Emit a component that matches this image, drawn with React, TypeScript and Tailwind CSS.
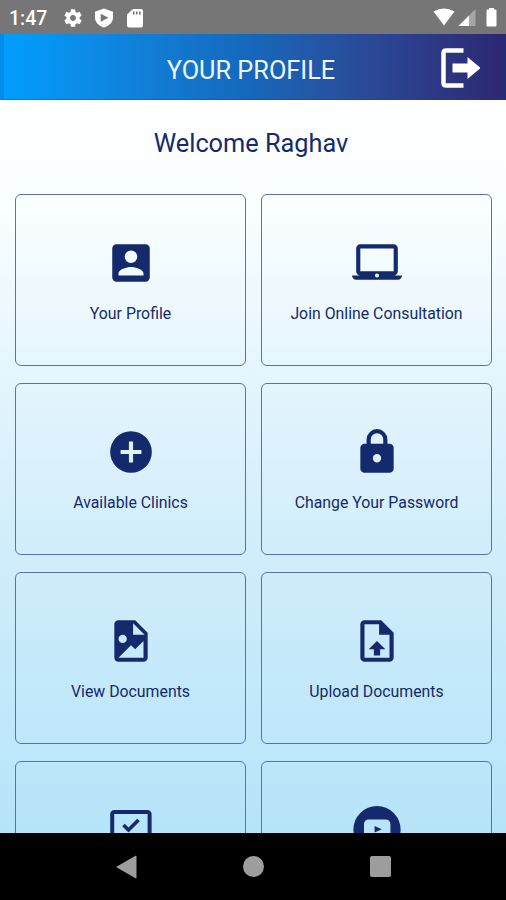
import type { ReactNode } from "react";

type Tile = { label: string; icon: ReactNode };

function Glyph({ d }: { d: string }) {
  return (
    <svg viewBox="0 0 24 24" className="size-[50px] shrink-0" fill="currentColor">
      <path d={d} />
    </svg>
  );
}

const tiles: Tile[] = [
  {
    label: "Your Profile",
    icon: (
      <Glyph d="M6,17C6,15 10,13.9 12,13.9C14,13.9 18,15 18,17V18H6M15,9A3,3 0 0,1 12,12A3,3 0 0,1 9,9A3,3 0 0,1 12,6A3,3 0 0,1 15,9M3,5V19A2,2 0 0,0 5,21H19A2,2 0 0,0 21,19V5A2,2 0 0,0 19,3H5C3.89,3 3,3.9 3,5Z" />
    ),
  },
  {
    label: "Join Online Consultation",
    icon: (
      <Glyph d="M12,19A1,1 0 0,1 11,18A1,1 0 0,1 12,17A1,1 0 0,1 13,18A1,1 0 0,1 12,19M4,5H20V16H4M20,18A2,2 0 0,0 22,16V5C22,3.89 21.1,3 20,3H4C2.89,3 2,3.89 2,5V16A2,2 0 0,0 4,18H0A2,2 0 0,0 2,20H22A2,2 0 0,0 24,18H20Z" />
    ),
  },
  {
    label: "Available Clinics",
    icon: (
      <Glyph d="M17,13H13V17H11V13H7V11H11V7H13V11H17M12,2A10,10 0 0,0 2,12A10,10 0 0,0 12,22A10,10 0 0,0 22,12A10,10 0 0,0 12,2Z" />
    ),
  },
  {
    label: "Change Your Password",
    icon: (
      <Glyph d="M12,17A2,2 0 0,0 14,15C14,13.89 13.1,13 12,13A2,2 0 0,0 10,15A2,2 0 0,0 12,17M18,8A2,2 0 0,1 20,10V20A2,2 0 0,1 18,22H6A2,2 0 0,1 4,20V10C4,8.89 4.9,8 6,8H7V6A5,5 0 0,1 12,1A5,5 0 0,1 17,6V8H18M12,3A3,3 0 0,0 9,6V8H15V6A3,3 0 0,0 12,3Z" />
    ),
  },
  {
    label: "View Documents",
    icon: (
      <Glyph d="M13,9H18.5L13,3.5V9M6,2H14L20,8V20A2,2 0 0,1 18,22H6C4.89,22 4,21.1 4,20V4C4,2.89 4.89,2 6,2M6,20H15L18,20V12L14,16L12,14L6,20M8,9A2,2 0 0,0 6,11A2,2 0 0,0 8,13A2,2 0 0,0 10,11A2,2 0 0,0 8,9Z" />
    ),
  },
  {
    label: "Upload Documents",
    icon: (
      <Glyph d="M14,2L20,8V20A2,2 0 0,1 18,22H6A2,2 0 0,1 4,20V4A2,2 0 0,1 6,2H14M18,20V9H13V4H6V20H18M12,12L16,16H13.5V19H10.5V16H8L12,12Z" />
    ),
  },
  {
    label: "",
    icon: (
      <svg viewBox="0 0 50 50" className="size-[50px] shrink-0" fill="none" stroke="currentColor">
        <rect x="6.2" y="6.9" width="37.4" height="34" rx="2.2" strokeWidth="4" />
        <path d="M17.500 20l5 5 10-10" strokeWidth="3.6" />
      </svg>
    ),
  },
  {
    label: "",
    icon: (
      <svg viewBox="0 0 50 50" className="size-[50px] shrink-0">
        <circle cx="25" cy="24.6" r="23.6" fill="currentColor" />
        <rect x="12" y="14.500" width="26.4" height="20" rx="4.5" fill="#b8e5f9" />
        <path d="M22.6 21l7.2 3.300-7.2 3.300z" fill="currentColor" />
      </svg>
    ),
  },
];

function StatusBar() {
  return (
    <div className="flex h-[34px] shrink-0 items-center bg-[#767676] pl-[9px] pr-2 text-white">
      <span className="w-[53px] pt-1 text-[19.5px] leading-none font-medium">1:47</span>
      <svg viewBox="0 0 24 24" className="mt-px size-[22px]" fill="currentColor">
        <path d="M19.14,12.94c0.04-0.3,0.06-0.61,0.06-0.94c0-0.32-0.02-0.64-0.07-0.94l2.03-1.58c0.18-0.14,0.23-0.41,0.12-0.61l-1.92-3.32c-0.12-0.22-0.37-0.29-0.59-0.22l-2.39,0.96c-0.5-0.38-1.03-0.7-1.62-0.94L14.4,2.81c-0.04-0.24-0.24-0.41-0.48-0.41h-3.84c-0.24,0-0.43,0.17-0.47,0.41L9.25,5.35C8.66,5.59,8.12,5.92,7.63,6.29L5.24,5.33c-0.22-0.08-0.47,0-0.59,0.22L2.74,8.87C2.62,9.08,2.66,9.34,2.86,9.48l2.03,1.58C4.84,11.36,4.8,11.69,4.8,12s0.02,0.64,0.07,0.94l-2.03,1.58c-0.18,0.14-0.23,0.41-0.12,0.61l1.92,3.32c0.12,0.22,0.37,0.29,0.59,0.22l2.39-0.96c0.5,0.38,1.03,0.7,1.62,0.94l0.36,2.54c0.05,0.24,0.24,0.41,0.48,0.41h3.84c0.24,0,0.44-0.17,0.47-0.41l0.36-2.54c0.59-0.24,1.13-0.56,1.62-0.94l2.39,0.96c0.22,0.08,0.47,0,0.59-0.22l1.92-3.32c0.12-0.22,0.07-0.47-0.12-0.61L19.14,12.94z M12,15.2c-1.8,0-3.2-1.4-3.2-3.2s1.4-3.2,3.2-3.2s3.2,1.4,3.2,3.2S13.8,15.2,12,15.2z" />
      </svg>
      <svg viewBox="0 0 20 20" className="mt-px ml-[10px] size-5" fill="currentColor" fillRule="evenodd">
        <path d="M10 .6l9 3.200v5.800c0 4.600-3.700 8.400-9 10-5.300-1.600-9-5.400-9-10V3.800zM6.700 5.800v8l7.800-4z" />
      </svg>
      <svg viewBox="0 0 16 20" className="mt-px ml-[13px] h-5 w-4" fill="currentColor" fillRule="evenodd">
        <path d="M6 1h8a2 2 0 0 1 2 2v14.500a2 2 0 0 1-2 2H2a2 2 0 0 1-2-2V6.500zM6 3.500v3h1.600v-3zM9 3.500v3h1.600v-3zM12 3.500v3h1.600v-3z" />
      </svg>
      <svg viewBox="0 0 66 20" className="ml-auto h-5 w-[66px]" fill="currentColor">
        <path d="M1.500 4.500Q12 -1.500 22.500 4.500L12 18.500z" />
        <path d="M43.500 2v17h-17z" opacity=".35" />
        <path d="M37 8.500V19H26.500z" />
        <path d="M57 2.500V1h5v1.500h1.300q1.200 0 1.200 1.200v14.600q0 1.200-1.200 1.200h-7.600q-1.200 0-1.200-1.200V3.700q0-1.200 1.200-1.200z" />
      </svg>
    </div>
  );
}

export default function App() {
  return (
    <div className="flex h-[900px] w-[506px] flex-col overflow-hidden bg-black font-['Roboto',sans-serif]">
      <StatusBar />
      <header className="grid h-[66px] shrink-0 grid-cols-[1fr_auto_1fr] items-center border-x-4 border-b border-x-[#0b3f8f]/20 border-b-[#1c3f90]/40 bg-linear-to-r from-[#009fff] via-[#1567ba] to-[#2c2770] bg-origin-border">
        <span />
        <h1 className="mr-1 pt-[9px] text-[25.3px] leading-8 text-[#eef6ff]">YOUR PROFILE</h1>
        <svg viewBox="0 0 40 40" className="mt-[3px] mr-[22px] size-10 justify-self-end" fill="none">
          <path d="M23.500 2.500H6Q3.500 2.500 3.500 5v30q0 2.500 2.500 2.500h17.500" stroke="#fff" strokeWidth="4.500" />
          <path d="M12.500 15.500h15V9L40.500 20l-13 11v-6.500h-15z" fill="#fff" />
        </svg>
      </header>
      <main className="min-h-0 flex-1 overflow-hidden bg-[linear-gradient(to_bottom,#ffffff_0%,#f9feff_15%,#e4f5fd_38%,#d0edfb_62%,#b5e4f9_100%)] px-[15px] text-[#152a6c]">
        <h2 className="pt-7 pr-1 text-center text-[25.3px] leading-8">Welcome Raghav</h2>
        <div className="mt-[34px] grid grid-cols-[231px_231px] gap-x-[15px] gap-y-[17px]">
          {tiles.map(({ label, icon }, i) => (
            <div
              key={i}
              className="flex h-[172px] flex-col items-center rounded-md border border-[#5a6fb8] pt-[43px]"
            >
              {icon}
              <span className="mt-[15.5px] text-[15.85px] leading-5 whitespace-nowrap">{label}</span>
            </div>
          ))}
        </div>
      </main>
      <nav className="grid h-[67px] shrink-0 grid-cols-[1fr_22px_105px_22px_105px_22px_1fr] items-center bg-black pl-px text-[#9d9d9d]">
        <svg viewBox="0 0 22 24" className="col-start-2 h-6 w-[22px]" fill="currentColor">
          <path d="M0 12L19.500 .8q1-.5 1 .8v20.800q0 1.300-1 .8z" />
        </svg>
        <span className="col-start-4 size-[21px] rounded-full bg-current" />
        <span className="col-start-6 size-[21px] rounded-[2px] bg-current" />
      </nav>
    </div>
  );
}
